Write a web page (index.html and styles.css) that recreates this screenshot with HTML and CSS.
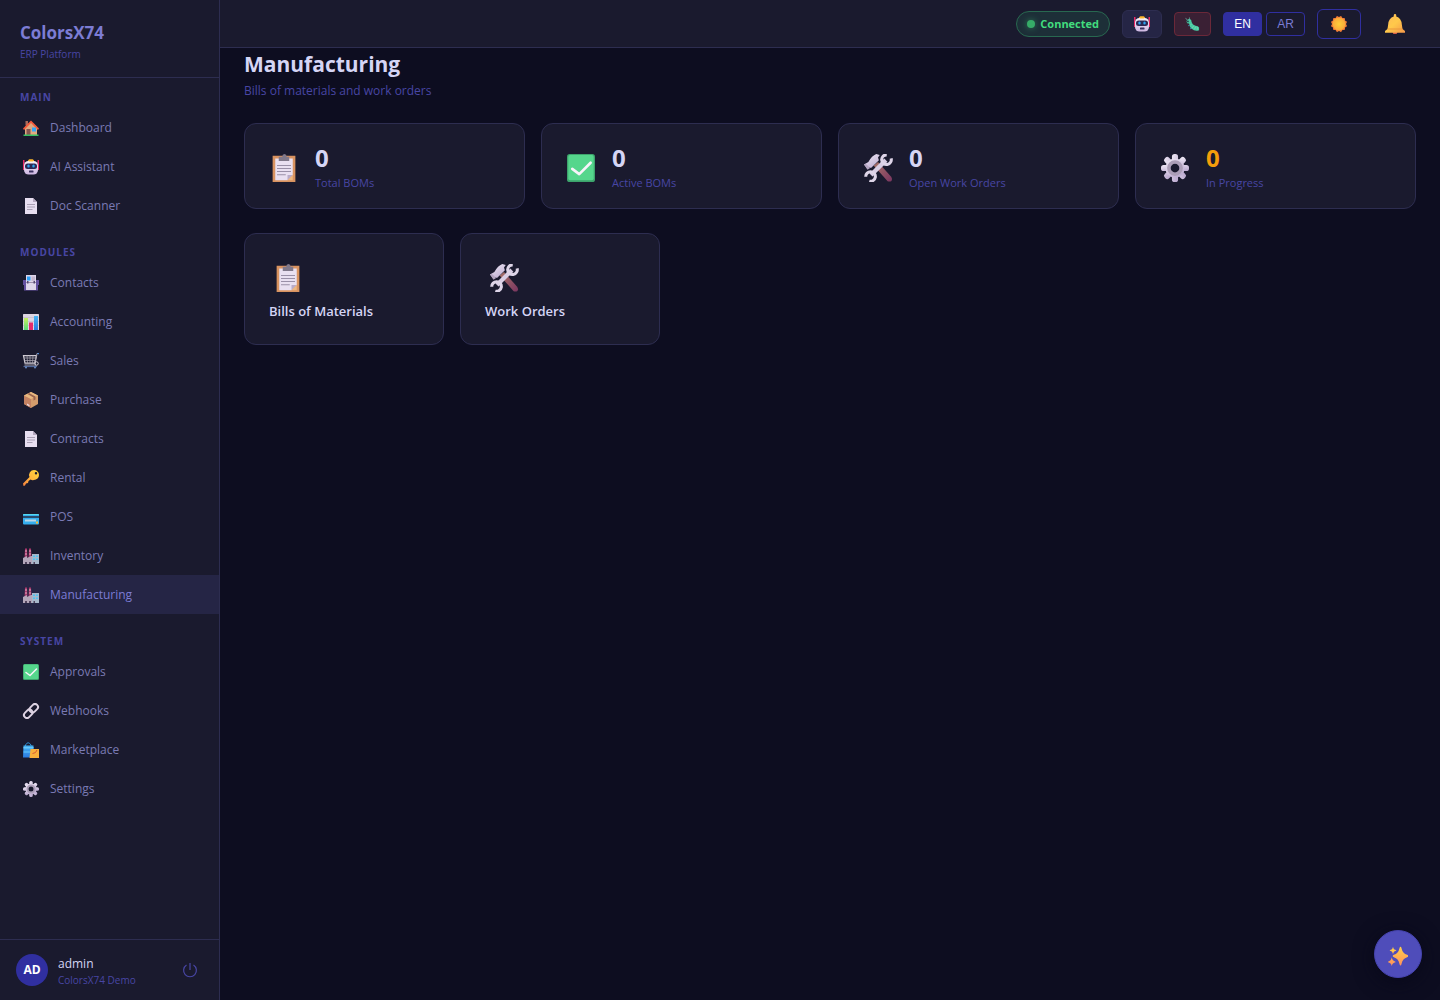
FILE: index.html
```html
<!DOCTYPE html>
<html lang="en">
<head>
<meta charset="utf-8">
<meta name="viewport" content="width=device-width, initial-scale=1">
<title>Manufacturing - ColorsX74</title>
<link rel="stylesheet" href="styles.css">
</head>
<body>
<svg class="sprite" width="0" height="0" aria-hidden="true">
  <defs>
    <linearGradient id="g-silver" x1="0" y1="0" x2="0.6" y2="1"><stop offset="0" stop-color="#f0eaf6"/><stop offset="1" stop-color="#bfaed2"/></linearGradient>
    <linearGradient id="g-robot" x1="0" y1="0" x2="0" y2="1"><stop offset="0" stop-color="#f8f2fb"/><stop offset="1" stop-color="#cdb6e2"/></linearGradient>
    <linearGradient id="g-gold" x1="1" y1="0" x2="0" y2="1"><stop offset="0" stop-color="#ffd83c"/><stop offset="0.5" stop-color="#ffb83d"/><stop offset="1" stop-color="#f5803f"/></linearGradient>
    <linearGradient id="g-spark" x1="0" y1="0" x2="0" y2="1"><stop offset="0" stop-color="#ffd24a"/><stop offset="1" stop-color="#ff8f5c"/></linearGradient>
    <linearGradient id="g-bell" x1="0" y1="0" x2="1" y2="1"><stop offset="0" stop-color="#ffb85a"/><stop offset="0.5" stop-color="#ffc94a"/><stop offset="1" stop-color="#f5984a"/></linearGradient>
    <linearGradient id="g-wood" x1="0" y1="0" x2="1" y2="1"><stop offset="0" stop-color="#a87468"/><stop offset="1" stop-color="#7a3560"/></linearGradient>
    <linearGradient id="g-lime" x1="0" y1="0" x2="0" y2="1"><stop offset="0" stop-color="#c8f060"/><stop offset="1" stop-color="#58d878"/></linearGradient>
    <linearGradient id="g-blue" x1="0" y1="0" x2="0" y2="1"><stop offset="0" stop-color="#46b4f4"/><stop offset="1" stop-color="#2a7ae0"/></linearGradient>
    <radialGradient id="g-sun"><stop offset="0" stop-color="#ffce3a"/><stop offset="1" stop-color="#f9a83a"/></radialGradient>
  </defs>
  <symbol id="i-house" viewBox="0 0 32 32">
    <path d="M5 2h5v9H5z" fill="#a86a5a"/><path d="M4 14 16 3l12 11v16H4z" fill="#e0a880"/>
    <path d="M0 17 16 1l16 16-2 3L16 6 2 20z" fill="#f4593a"/><path d="M7 18h8v12H7z" fill="#86564f"/>
    <path d="M18 15h8v8h-8z" fill="#35a6f4"/><path d="M1 29h30v3H1z" fill="#35bf62"/>
  </symbol>
  <symbol id="i-robot" viewBox="0 0 32 32">
    <path d="M0 2h3v20H0zM29 2h3v20h-3z" fill="#e62a66"/><rect x="10" y="1" width="12" height="7" rx="3" fill="#fcb62c"/>
    <rect x="2" y="4" width="28" height="27" rx="9" fill="url(#g-robot)"/><rect x="4" y="9" width="24" height="11" rx="5" fill="#2c2954"/>
    <ellipse cx="11" cy="14" rx="2.5" ry="3.2" fill="#2da2ee"/><ellipse cx="21" cy="14" rx="2.5" ry="3.2" fill="#2da2ee"/>
    <rect x="12" y="23" width="9" height="4" rx="1" fill="#3b3060"/><rect x="11" y="1" width="10" height="4" rx="2" fill="#fcb62c"/>
  </symbol>
  <symbol id="i-page" viewBox="0 0 32 32">
    <path d="M4 0h16l8 8v24H4z" fill="#e7def0"/><path d="M20 0l8 8h-8z" fill="#b5a8bf"/>
    <path d="M8 12h16v2H8zM8 17h16v2H8zM8 22h11v2H8z" fill="#aaa0b4"/>
  </symbol>
  <symbol id="i-index" viewBox="0 0 32 32">
    <path d="M0 10h32v10h-2v11H2V20H0z" fill="#6450a0"/><path d="M6 0h20v30H6z" fill="#ded5ea"/>
    <path d="M8 3h7v8H8z" fill="#2d9ff5"/><path d="M17 3h7v9h-7z" fill="#c5b8d0"/><path d="M6 14h20v2H6z" fill="#9c8eaf"/><path d="M8 12h3v5H8zM21 12h3v5h-3z" fill="#55486e"/>
  </symbol>
  <symbol id="i-chart" viewBox="0 0 32 32">
    <rect width="32" height="32" rx="1" fill="#dcd5e2"/><path d="M0 7h32v1H0zM0 15h32v1H0zM0 23h32v1H0z" fill="#bcb4c4"/>
    <path d="M2 8h8v24H2z" fill="url(#g-lime)"/><path d="M12 17h8v15h-8z" fill="#e42c6c"/><path d="M22 4h8v28h-8z" fill="url(#g-blue)"/>
  </symbol>
  <symbol id="i-cart" viewBox="0 0 32 32" fill="none">
    <path d="M1 5h26l-3 15H4z" stroke="#d0cbd4" stroke-width="2.500"/><path d="M8 5l1 15M14 5v15M20 5l-1 15M2 10h24M3 15h22" stroke="#aaa5b0" stroke-width="1.500"/>
    <path d="M32 1h-4l-5 19 3 4H3" stroke="#aaa5b0" stroke-width="2"/><path d="M1 27h27" stroke="#53699a" stroke-width="2.500"/><circle cx="27" cy="21" r="3.500" stroke="#d0cbd4" stroke-width="2"/>
    <circle cx="6" cy="29" r="2" fill="#688ec9"/><circle cx="24" cy="29" r="2" fill="#688ec9"/><path d="M29 1h3" stroke="#4688d8" stroke-width="2.500"/>
  </symbol>
  <symbol id="i-box" viewBox="0 0 32 32">
    <path d="M16 0 30 7v17l-14 8L2 24V7z" fill="#d49c6c"/><path d="M2 7l14 7v18L2 24z" fill="#c48262"/><path d="M16 0 30 7l-14 7L2 7z" fill="#e8b880"/>
    <path d="M9 4l3-2 13 7v6l-4 2v-6z" fill="#99634e"/><path d="M8 23l5 3v3l-5-3z" fill="#eedce6"/>
  </symbol>
  <symbol id="i-key" viewBox="0 0 32 32">
    <path fill-rule="evenodd" d="M22 0a10 10 0 0 1 0 20q-4 1-7-1l-4 3-1 4-4 1-2 4-3 1-1-5 13-13A10 10 0 0 1 22 0zm4 4a2.500 2.500 0 1 0 0 5 2.500 2.500 0 0 0 0-5z" fill="url(#g-gold)"/>
  </symbol>
  <symbol id="i-card" viewBox="0 0 32 32">
    <rect y="10" width="32" height="21" rx="2" fill="#35aeee"/><path d="M0 12q0-2 2-2h28q2 0 2 2z" fill="#56d8ee"/><path d="M0 14h32v4H0z" fill="#294b6c"/><path d="M4 21h22v4H4z" fill="#bcd6e6"/><path d="M26 25h4v4h-4z" fill="#f5bd34"/>
  </symbol>
  <symbol id="i-factory" viewBox="0 0 32 32">
    <path d="M4 1h4l1 21H3zM12 1h4l1 21h-6z" fill="#a83a6e"/><path d="M4 5h4v2H4zM4 11h4v2H4zM12 5h4v2h-4zM12 11h4v2h-4z" fill="#dfaabc"/>
    <path d="M0 20l8-4v4l8-4h2v16H0z" fill="#b3a7ba"/><path d="M18 12h14v20H18z" fill="#a7b8ca"/><path d="M20 15h4v3h-4zM26 15h4v3h-4zM20 21h4v3h-4zM26 21h4v3h-4z" fill="#50c3f2"/><path d="M4 28h4v4H4zM12 28h4v4h-4zM21 28h3v4h-3z" fill="#51445e"/>
  </symbol>
  <symbol id="i-check" viewBox="0 0 32 32">
    <rect width="32" height="32" rx="3" fill="#3da36c"/><rect x="1.500" y="1" width="29" height="29" rx="2" fill="#55d68c"/><path d="M6 17l8 6L27 10" fill="none" stroke="#f8f3fa" stroke-width="3" stroke-linecap="round" stroke-linejoin="round"/>
  </symbol>
  <symbol id="i-link" viewBox="0 0 32 32" fill="none" stroke="#ddd2e2" stroke-width="4">
    <rect x="-9.500" y="-6" width="19" height="12" rx="6" transform="translate(10.500 21.500) rotate(-45)"/><rect x="-9.500" y="-6" width="19" height="12" rx="6" transform="translate(21.500 10.500) rotate(-45)"/>
  </symbol>
  <symbol id="i-bags" viewBox="0 0 32 32">
    <path d="M5 10V6q5-9 11 0v4" fill="none" stroke="#2c8fd4" stroke-width="2"/><path d="M1 7h20v24H0z" fill="url(#g-blue)"/><path d="M1 10h20v3H1zM1 19h20v2H1z" fill="#68c8fa"/>
    <path d="M15 14h17v18H13z" fill="#f8af3c"/><path d="M19 23q7 0 9-7" fill="none" stroke="#d55c35" stroke-width="2"/>
  </symbol>
  <symbol id="i-gear" viewBox="0 0 32 32">
    <g fill="url(#g-silver)"><rect x="12.500" y="0" width="7" height="32" rx="3"/><rect x="0" y="12.500" width="32" height="7" rx="3"/><rect x="12.500" y="0" width="7" height="32" rx="3" transform="rotate(45 16 16)"/><rect x="12.500" y="0" width="7" height="32" rx="3" transform="rotate(-45 16 16)"/><circle cx="16" cy="16" r="11"/></g>
    <circle cx="16" cy="16" r="7" fill="none" stroke="#ab9eb7" stroke-width="4"/><circle cx="16" cy="16" r="5" fill="#1a1a2e"/>
  </symbol>
  <symbol id="i-clip" viewBox="0 0 32 32">
    <path d="M3 2h26v30H3z" fill="#d99360"/><path d="M6 5h20v19l-6 6H6z" fill="#e9e0f1"/><path d="M20 30v-6h6z" fill="#b9abc8"/><path d="M26 24v6h-6z" fill="#edb883"/>
    <path d="M10 3h4q0-3 2.500-3T19 3h3v5H10z" fill="#80788a"/><path d="M8 12.500h16v1.200H8zM8 16h16v1.200H8zM8 19.500h16v1.200H8zM8 23h10v1.200H8z" fill="#9a90a8"/>
  </symbol>
  <symbol id="i-tools" viewBox="0 0 32 32">
    <path d="M11 13l5-4 15 17q2 3 0 5-2 1-4 0z" fill="url(#g-wood)"/>
    <path d="M0 12l5-3q4-7 9-9l4 1-2 3 1 3-9 9-2-1-2 2z" fill="url(#g-silver)"/><path d="M0 12l2-1 5 5-3 2z" fill="#b4a5c1"/>
    <path d="M8 24 25 7" stroke="#d9cee4" stroke-width="5"/>
    <path d="M31 5a5.500 5.500 0 1 1-5-4M2 26a5.500 5.500 0 1 1 4 5" fill="none" stroke="#ded5e8" stroke-width="3.500"/>
  </symbol>
  <symbol id="i-bug" viewBox="0 0 32 32">
    <path d="M3 8q5-6 10-1 1 11 10 13 6 0 8 4v6q-9 4-17-3Q9 23 8 15 1 15 3 8z" fill="#48c9a2"/><path d="M4 7 0 2M9 6V1" stroke="#70bdaf" stroke-width="1.500"/>
    <path d="M11 19l3-3M15 25l4-5M21 28l2-6M27 29v-6" stroke="#85dfb5" stroke-width="1.500"/><circle cx="5.500" cy="10" r="2" fill="#263246"/><path d="M6 18l4 2-3 1zM11 25l4 2-4 1z" fill="#42a9da"/>
  </symbol>
  <symbol id="i-sun" viewBox="0 0 32 32">
    <g fill="#ed7836"><rect x="4" y="4" width="24" height="24" rx="2"/><rect x="4" y="4" width="24" height="24" rx="2" transform="rotate(30 16 16)"/><rect x="4" y="4" width="24" height="24" rx="2" transform="rotate(60 16 16)"/></g><circle cx="16" cy="16" r="13" fill="url(#g-sun)"/>
  </symbol>
  <symbol id="i-bell" viewBox="0 0 32 32">
    <circle cx="16" cy="29" r="3.500" fill="#d8604a"/><path d="M14 4V2q0-2 2-2t2 2v2q8 2 9 13l1 7 4 3v3H0v-3l4-3 1-7Q6 6 14 4z" fill="url(#g-bell)"/><path d="M4 24h24" stroke="#e9953c" stroke-width="1.500"/>
  </symbol>
  <symbol id="i-spark" viewBox="0 0 32 32" fill="url(#g-spark)">
    <path d="M20 1q1 0 1.500 2 2 9 9 11 2 .5 2 2t-2 2q-7 2-9 11-.5 2-1.500 2t-1.500-2q-2-9-9-11-2-.5-2-2t2-2q7-2 9-11Q19 1 20 1zM8 1q1 5 5 5.500v1Q9 8 8 13q-1-5-5-5.500v-1Q7 6 8 1zM6 18q1 6 6 7v1q-5 1-6 6-1-5-6-6v-1q5-1 6-7z"/>
  </symbol>
  <symbol id="i-power" viewBox="0 0 16 16" fill="none" stroke="currentColor" stroke-width="1.200"><path d="M8 1v7M4.500 3a6.400 6.400 0 1 0 7 0"/></symbol>
</svg>

<div class="app">
  <aside class="sidebar">
    <div class="brand">
      <div class="brand-name">ColorsX74</div>
      <div class="brand-sub">ERP Platform</div>
    </div>
    <nav class="nav">
      <section class="nav-group">
        <h2 class="nav-title">MAIN</h2>
        <a class="nav-item" href="#"><svg class="nav-icon"><use href="#i-house"/></svg>Dashboard</a>
        <a class="nav-item" href="#"><svg class="nav-icon"><use href="#i-robot"/></svg>AI Assistant</a>
        <a class="nav-item" href="#"><svg class="nav-icon"><use href="#i-page"/></svg>Doc Scanner</a>
      </section>
      <section class="nav-group">
        <h2 class="nav-title">MODULES</h2>
        <a class="nav-item" href="#"><svg class="nav-icon"><use href="#i-index"/></svg>Contacts</a>
        <a class="nav-item" href="#"><svg class="nav-icon"><use href="#i-chart"/></svg>Accounting</a>
        <a class="nav-item" href="#"><svg class="nav-icon"><use href="#i-cart"/></svg>Sales</a>
        <a class="nav-item" href="#"><svg class="nav-icon"><use href="#i-box"/></svg>Purchase</a>
        <a class="nav-item" href="#"><svg class="nav-icon"><use href="#i-page"/></svg>Contracts</a>
        <a class="nav-item" href="#"><svg class="nav-icon"><use href="#i-key"/></svg>Rental</a>
        <a class="nav-item" href="#"><svg class="nav-icon"><use href="#i-card"/></svg>POS</a>
        <a class="nav-item" href="#"><svg class="nav-icon"><use href="#i-factory"/></svg>Inventory</a>
        <a class="nav-item active" href="#" aria-current="page"><svg class="nav-icon"><use href="#i-factory"/></svg>Manufacturing</a>
      </section>
      <section class="nav-group">
        <h2 class="nav-title">SYSTEM</h2>
        <a class="nav-item" href="#"><svg class="nav-icon"><use href="#i-check"/></svg>Approvals</a>
        <a class="nav-item" href="#"><svg class="nav-icon"><use href="#i-link"/></svg>Webhooks</a>
        <a class="nav-item" href="#"><svg class="nav-icon"><use href="#i-bags"/></svg>Marketplace</a>
        <a class="nav-item" href="#"><svg class="nav-icon"><use href="#i-gear"/></svg>Settings</a>
      </section>
    </nav>
    <div class="user">
      <div class="avatar">AD</div>
      <div class="user-info">
        <div class="user-name">admin</div>
        <div class="user-org">ColorsX74 Demo</div>
      </div>
      <button class="logout" type="button" aria-label="Log out"><svg><use href="#i-power"/></svg></button>
    </div>
  </aside>

  <div class="page">
    <header class="topbar">
      <div class="status"><span class="dot"></span>Connected</div>
      <button class="tool robot" type="button" aria-label="Assistant"><svg><use href="#i-robot"/></svg></button>
      <button class="tool bug" type="button" aria-label="Report a bug"><svg><use href="#i-bug"/></svg></button>
      <div class="langs">
        <button class="lang selected" type="button">EN</button>
        <button class="lang" type="button">AR</button>
      </div>
      <button class="tool theme" type="button" aria-label="Toggle theme"><svg><use href="#i-sun"/></svg></button>
      <button class="tool bell" type="button" aria-label="Notifications"><svg><use href="#i-bell"/></svg></button>
    </header>
    <main class="content">
      <h1 class="title">Manufacturing</h1>
      <p class="subtitle">Bills of materials and work orders</p>
      <div class="stats">
        <div class="stat"><svg class="big-icon"><use href="#i-clip"/></svg><div><div class="value">0</div><div class="label">Total BOMs</div></div></div>
        <div class="stat"><svg class="big-icon"><use href="#i-check"/></svg><div><div class="value">0</div><div class="label">Active BOMs</div></div></div>
        <div class="stat"><svg class="big-icon"><use href="#i-tools"/></svg><div><div class="value">0</div><div class="label">Open Work Orders</div></div></div>
        <div class="stat"><svg class="big-icon"><use href="#i-gear"/></svg><div><div class="value warn">0</div><div class="label">In Progress</div></div></div>
      </div>
      <div class="links">
        <a class="link-card" href="#"><svg class="big-icon"><use href="#i-clip"/></svg>Bills of Materials</a>
        <a class="link-card" href="#"><svg class="big-icon"><use href="#i-tools"/></svg>Work Orders</a>
      </div>
    </main>
  </div>
</div>
<button class="fab" type="button" aria-label="AI actions"><svg><use href="#i-spark"/></svg></button>
</body>
</html>
```
FILE: styles.css
```css
* { box-sizing: border-box; }

body {
  margin: 0;
  background: #0d0d20;
  color: #d5d5f5;
  font: 12px/18px "Open Sans", "Noto Sans", sans-serif;
}

button { font: inherit; color: inherit; padding: 0; cursor: pointer; }
a { color: inherit; text-decoration: none; }
h1, h2, p { margin: 0; }
svg { display: block; flex: none; }
.sprite { position: absolute; }

.app { display: flex; min-height: 100vh; }

.sidebar {
  display: flex;
  flex-direction: column;
  flex: none;
  width: 220px;
  background: #1a1a2e;
  border-right: 1px solid #2d2d50;
}

.brand { padding: 20px 20px 14px; border-bottom: 1px solid #2d2d50; }
.brand-name { font-size: 17px; line-height: 25px; font-weight: 700; color: #7c7cd4; }
.brand-sub { font-size: 10px; line-height: 18px; color: #4846a4; }

.nav { flex: 1; }
.nav-group { margin-bottom: 8px; }
.nav-title {
  padding: 12px 20px 4px;
  font-size: 10px;
  line-height: 14px;
  font-weight: 700;
  letter-spacing: 1px;
  color: #4846a4;
}
.nav-item {
  display: flex;
  align-items: center;
  gap: 8px;
  height: 39px;
  padding: 0 20px;
  color: #7a7ab4;
}
.nav-item.active { background: #252545; color: #7c7cd4; }
.nav-icon { width: 22px; height: 16px; }

.user {
  display: flex;
  align-items: center;
  gap: 10px;
  padding: 14px 16px;
  border-top: 1px solid #2d2d50;
}
.avatar {
  width: 32px;
  height: 32px;
  border-radius: 50%;
  background: #302fa0;
  color: #fff;
  font-weight: 700;
  line-height: 32px;
  text-align: center;
}
.user-info { flex: 1; padding-top: 2px; }
.user-name { line-height: 16px; color: #d5d5f5; }
.user-org { font-size: 10px; line-height: 16px; color: #4846a4; }
.user-info { margin-bottom: -2px; }
.logout { padding: 5px; border: 0; background: none; color: #4846a4; }
.logout svg { width: 16px; height: 16px; }

.page { flex: 1; min-width: 0; }

.topbar {
  display: flex;
  align-items: center;
  justify-content: flex-end;
  gap: 12px;
  height: 48px;
  padding: 0 24px;
  background: #1a1a2e;
  border-bottom: 1px solid #2d2d50;
}
.status {
  display: flex;
  align-items: center;
  gap: 5px;
  height: 26px;
  padding: 0 10px;
  border: 1px solid #286850;
  border-radius: 13px;
  background: #1d2f38;
  color: #42dc7e;
  font-size: 11px;
  font-weight: 700;
}
.dot { width: 8px; height: 8px; border-radius: 50%; background: #36ac68; box-shadow: 0 0 6px #2b7e56; }
.tool { display: grid; place-items: center; border: 1px solid; border-radius: 6px; }
.tool svg { width: 16px; height: 16px; }
.robot { width: 40px; height: 28px; background: #252545; border-color: #2d2d50; }
.bug { width: 37px; height: 24px; background: #3a2034; border-color: #6b2839; border-radius: 4px; }
.bug svg { width: 15px; height: 14px; }
.theme { width: 44px; height: 30px; background: none; border-color: #302fa0; }
.bell { width: 43px; height: 30px; background: none; border-color: transparent; }
.bell svg { width: 20px; height: 20px; }
.langs { display: flex; gap: 4px; }
.lang {
  width: 39px;
  height: 24px;
  border: 1px solid #302fa0;
  border-radius: 4px;
  background: none;
  color: #7c7cd4;
  font-family: "Liberation Sans", Arial, sans-serif;
}
.lang.selected { background: #302fa0; color: #fff; }

.content { padding: 0 24px 24px; }
.title { font-size: 21px; line-height: 32px; font-weight: 700; }
.subtitle { margin-bottom: 21px; line-height: 22px; color: #4846a4; }

.stats { display: grid; grid-template-columns: repeat(auto-fit, minmax(220px, 1fr)); gap: 16px; margin-bottom: 24px; }
.stat {
  display: flex;
  align-items: center;
  gap: 12px;
  padding: 20px 20px 18px;
  border: 1px solid #2d2d50;
  border-radius: 12px;
  background: #1a1a2e;
}
.big-icon { width: 38px; height: 28px; }
.stat .big-icon { margin-top: 2px; }
.value { font-size: 24px; line-height: 28px; font-weight: 700; }
.value.warn { color: #f59e0b; }
.label { margin-top: 4px; font-size: 11px; line-height: 14px; color: #4846a4; }

.links { display: grid; grid-template-columns: repeat(auto-fill, 200px); gap: 16px; }
.link-card {
  display: flex;
  flex-direction: column;
  gap: 10px;
  padding: 30px 24px 24px;
  border: 1px solid #2d2d50;
  border-radius: 12px;
  background: #1a1a2e;
  font-size: 13px;
  font-weight: 600;
}

.fab {
  position: fixed;
  right: 18px;
  bottom: 22px;
  display: grid;
  place-items: center;
  width: 48px;
  height: 48px;
  border: 1px solid #4543ad;
  border-radius: 50%;
  background: #4f4dba;
  box-shadow: 0 4px 20px #08081a;
}
.fab svg { width: 20px; height: 20px; margin-top: 4px; }
```
